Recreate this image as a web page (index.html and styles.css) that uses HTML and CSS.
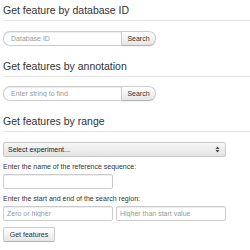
FILE: index.html
```html
<!DOCTYPE html>
<html>
<head>
<meta charset="utf-8">
<link rel="stylesheet" href="styles.css">
</head>
<body>
<div class="page">
  <div class="legend first">Get feature by database ID</div>
  <form class="search-form">
    <input class="search-query" type="text" placeholder="Database ID">
    <button class="btn search-btn" type="button">Search</button>
  </form>

  <div class="legend second">Get features by annotation</div>
  <form class="search-form ann">
    <input class="search-query" type="text" placeholder="Enter string to find">
    <button class="btn search-btn" type="button">Search</button>
  </form>

  <div class="legend third">Get features by range</div>
  <form class="range-form">
    <span class="select-wrap">
      <select class="select">
        <option>Select experiment...</option>
      </select>
      <svg class="select-arrows" width="5" height="7" viewBox="0 0 5 7">
        <path d="M2.5 0.5 L4.5 3 L0.5 3 Z" fill="#444"/>
        <path d="M2.5 6.5 L4.5 4 L0.5 4 Z" fill="#444"/>
      </svg>
    </span>
    <label class="label">Enter the name of the reference sequence:</label>
    <input class="text-input" type="text">
    <label class="label">Enter the start and end of the search region:</label>
    <div class="pair">
      <input class="text-input" type="text" placeholder="Zero or higher">
      <input class="text-input" type="text" placeholder="Higher than start value">
    </div>
    <button class="btn get-btn" type="button">Get features</button>
  </form>
</div>
</body>
</html>
```

FILE: styles.css
```css
* { box-sizing: border-box; }
html, body { margin: 0; padding: 0; background: #fff; }
body {
  font-family: "Liberation Sans", Arial, Helvetica, sans-serif;
  color: #333;
  font-size: 7px;
}
.page { padding: 0 0 0 3px; }

.legend {
  font-size: 10.5px;
  line-height: 20px;
  height: 21px;
  color: #333;
  border-bottom: 1px solid #e5e5e5;
}
.legend.first { margin-top: 0; }
.legend.second { margin-top: 10px; }
.legend.third { margin-top: 10px; }

form { margin: 0; }
.search-form { display: flex; margin-top: 10px; height: 15px; }
.search-form.ann { margin-top: 9px; }

input, button, select {
  font-family: "Liberation Sans", Arial, Helvetica, sans-serif;
  font-size: 7px;
  margin: 0;
}
input::placeholder { color: #999; }

.search-query {
  width: 118px;
  height: 15px;
  border: 1px solid #ccc;
  border-right: none;
  border-radius: 7px 0 0 7px;
  padding: 0 7px;
  box-shadow: inset 0 1px 1px rgba(0,0,0,0.075);
  color: #555;
  outline: none;
}

.btn {
  color: #333;
  background: linear-gradient(#ffffff, #e6e6e6);
  border: 1px solid #ccc;
  border-bottom-color: #b3b3b3;
  box-shadow: inset 0 1px 0 rgba(255,255,255,0.2), 0 1px 1px rgba(0,0,0,0.05);
  padding: 0;
  line-height: 13px;
}
.search-btn {
  width: 35px;
  height: 15px;
  border-radius: 0 7px 7px 0;
}

.range-form { margin-top: 10px; }
.select-wrap {
  position: relative;
  display: block;
  width: 223px;
  height: 15px;
}
.select {
  -webkit-appearance: none;
  appearance: none;
  display: block;
  width: 223px;
  height: 15px;
  border: 1px solid #c8c8c8;
  border-radius: 2px;
  background: linear-gradient(#f7f7f7, #e3e3e3);
  color: #222;
  padding: 0 0 0 4px;
  outline: none;
}
.select-arrows {
  position: absolute;
  right: 6px;
  top: 4px;
}

.label {
  display: block;
  line-height: 10px;
  margin-top: 5px;
  margin-bottom: 2px;
  color: #333;
}
.text-input {
  display: block;
  width: 110px;
  height: 15px;
  border: 1px solid #ccc;
  border-radius: 2px;
  padding: 0 3px;
  box-shadow: inset 0 1px 1px rgba(0,0,0,0.075);
  outline: none;
  color: #555;
}
.pair { display: flex; gap: 3px; }

.get-btn {
  display: block;
  margin-top: 6px;
  width: 52px;
  height: 15px;
  border-radius: 2px;
}
```
